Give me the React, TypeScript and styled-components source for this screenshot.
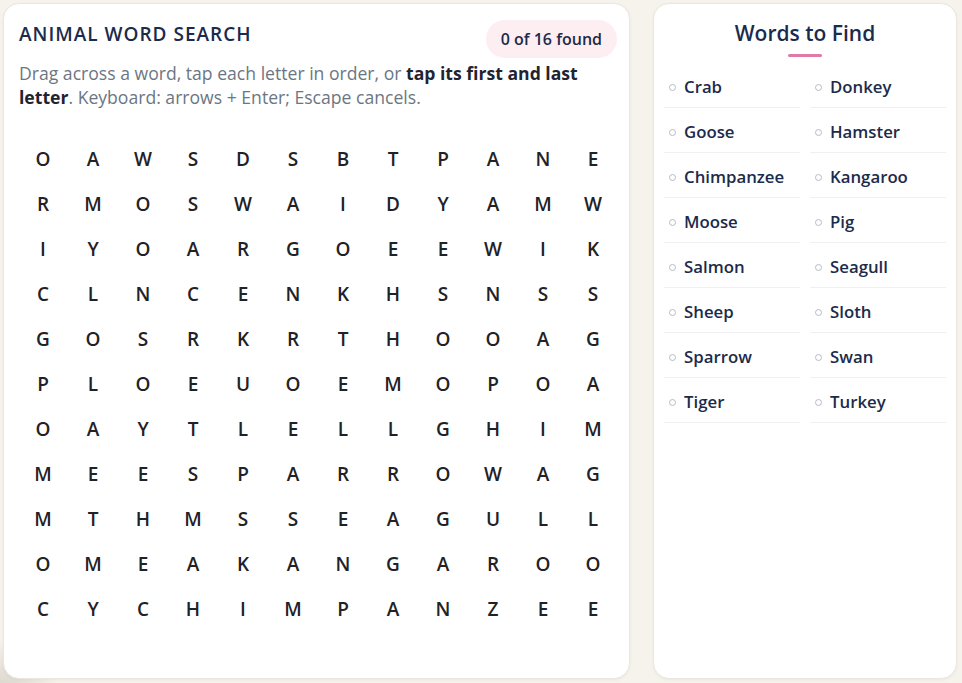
import React from "react";
import styled, { createGlobalStyle } from "styled-components";

const GlobalStyle = createGlobalStyle`
  html, body {
    margin: 0;
    padding: 0;
    background: #f6f3ec;
    font-family: "Open Sans", "Noto Sans", sans-serif;
  }
  body {
    background:
      radial-gradient(circle at 0px 700px, rgba(150, 140, 125, 0.35), rgba(150, 140, 125, 0) 60px),
      #f6f3ec;
    min-height: 683px;
  }
`;

const Page = styled.div`
  display: flex;
  gap: 23px;
  padding: 3px 5px 4px 3px;
  height: 683px;
  box-sizing: border-box;
`;

const Card = styled.section<{ $width: number }>`
  width: ${(p) => p.$width}px;
  flex: none;
  background: #ffffff;
  border-radius: 16px;
  border: 1px solid #ebe7df;
  box-shadow: 0 1px 3px rgba(60, 50, 30, 0.06);
  box-sizing: border-box;
`;

const PuzzleCard = styled(Card)`
  padding: 15px 12px 0 15px;
`;

const HeaderRow = styled.div`
  display: flex;
  align-items: flex-start;
  justify-content: space-between;
`;

const Title = styled.h1`
  margin: 0;
  padding-top: 2px;
  font-size: 19px;
  font-weight: 600;
  letter-spacing: 1px;
  color: #1b2b4b;
  line-height: 26px;
`;

const FoundPill = styled.div`
  background: #fdeef2;
  color: #1b2b4b;
  border-radius: 20px;
  font-size: 16px;
  font-weight: 600;
  line-height: 22px;
  padding: 8px 15px 8px 15px;
  margin-top: 1px;
`;

const Hint = styled.p`
  margin: 3px 0 0 0;
  font-size: 17.6px;
  line-height: 24px;
  color: #6b7683;
  max-width: 590px;

  b {
    font-weight: 700;
    color: #1e2430;
  }
`;

const Grid = styled.div`
  display: grid;
  grid-template-columns: repeat(12, 50px);
  grid-auto-rows: 45px;
  margin: 27px 0 0 -1px;
  user-select: none;
`;

const Cell = styled.div`
  display: flex;
  align-items: center;
  justify-content: center;
  font-size: 19px;
  font-weight: 600;
  color: #1f2226;
`;

const ListCard = styled(Card)`
  padding: 15px 10px 0 10px;
  display: flex;
  flex-direction: column;
`;

const ListTitle = styled.h2`
  margin: 0;
  text-align: center;
  font-size: 21px;
  font-weight: 600;
  color: #1b2b4b;
  line-height: 28px;
`;

const Accent = styled.div`
  width: 34px;
  height: 3px;
  border-radius: 2px;
  background: #e07aa8;
  margin: 7px auto 0;
`;

const WordList = styled.ul`
  list-style: none;
  margin: 6px 0 0 0;
  padding: 0;
  display: grid;
  grid-template-columns: 1fr 1fr;
  column-gap: 10px;
`;

const WordItem = styled.li`
  display: flex;
  align-items: center;
  gap: 8px;
  height: 45px;
  padding: 3px 0 0 5px;
  box-sizing: border-box;
  border-bottom: 1px solid #eef0f3;
  font-size: 16.8px;
  font-weight: 600;
  color: #1b2b4b;
`;

const Dot = styled.span`
  width: 5px;
  height: 5px;
  border-radius: 50%;
  border: 1px solid #b5bcc6;
  flex: none;
  margin-top: 2px;
`;

const rows = [
  "OAWSDSBTPANE",
  "RMOSWAIDYAMW",
  "IYOARGOEEWIK",
  "CLNCENKHSNSS",
  "GOSRKRTHOOAG",
  "PLOEUOEMOPOA",
  "OAYTLELLGHIM",
  "MEESPARROWAG",
  "MTHMSSEAGULL",
  "OMEAKANGAROO",
  "CYCHIMPANZEE",
];

const words = [
  "Crab", "Donkey",
  "Goose", "Hamster",
  "Chimpanzee", "Kangaroo",
  "Moose", "Pig",
  "Salmon", "Seagull",
  "Sheep", "Sloth",
  "Sparrow", "Swan",
  "Tiger", "Turkey",
];

export default function App() {
  return (
    <>
      <GlobalStyle />
      <Page>
        <PuzzleCard $width={627}>
          <HeaderRow>
            <Title>ANIMAL WORD SEARCH</Title>
            <FoundPill>0 of 16 found</FoundPill>
          </HeaderRow>
          <Hint>
            Drag across a word, tap each letter in order, or <b>tap its first and last letter</b>.
            Keyboard: arrows + Enter; Escape cancels.
          </Hint>
          <Grid role="grid">
            {rows.map((row, r) =>
              row.split("").map((ch, c) => <Cell key={`${r}-${c}`}>{ch}</Cell>)
            )}
          </Grid>
        </PuzzleCard>
        <ListCard $width={304}>
          <ListTitle>Words to Find</ListTitle>
          <Accent />
          <WordList>
            {words.map((w) => (
              <WordItem key={w}>
                <Dot />
                {w}
              </WordItem>
            ))}
          </WordList>
        </ListCard>
      </Page>
    </>
  );
}
